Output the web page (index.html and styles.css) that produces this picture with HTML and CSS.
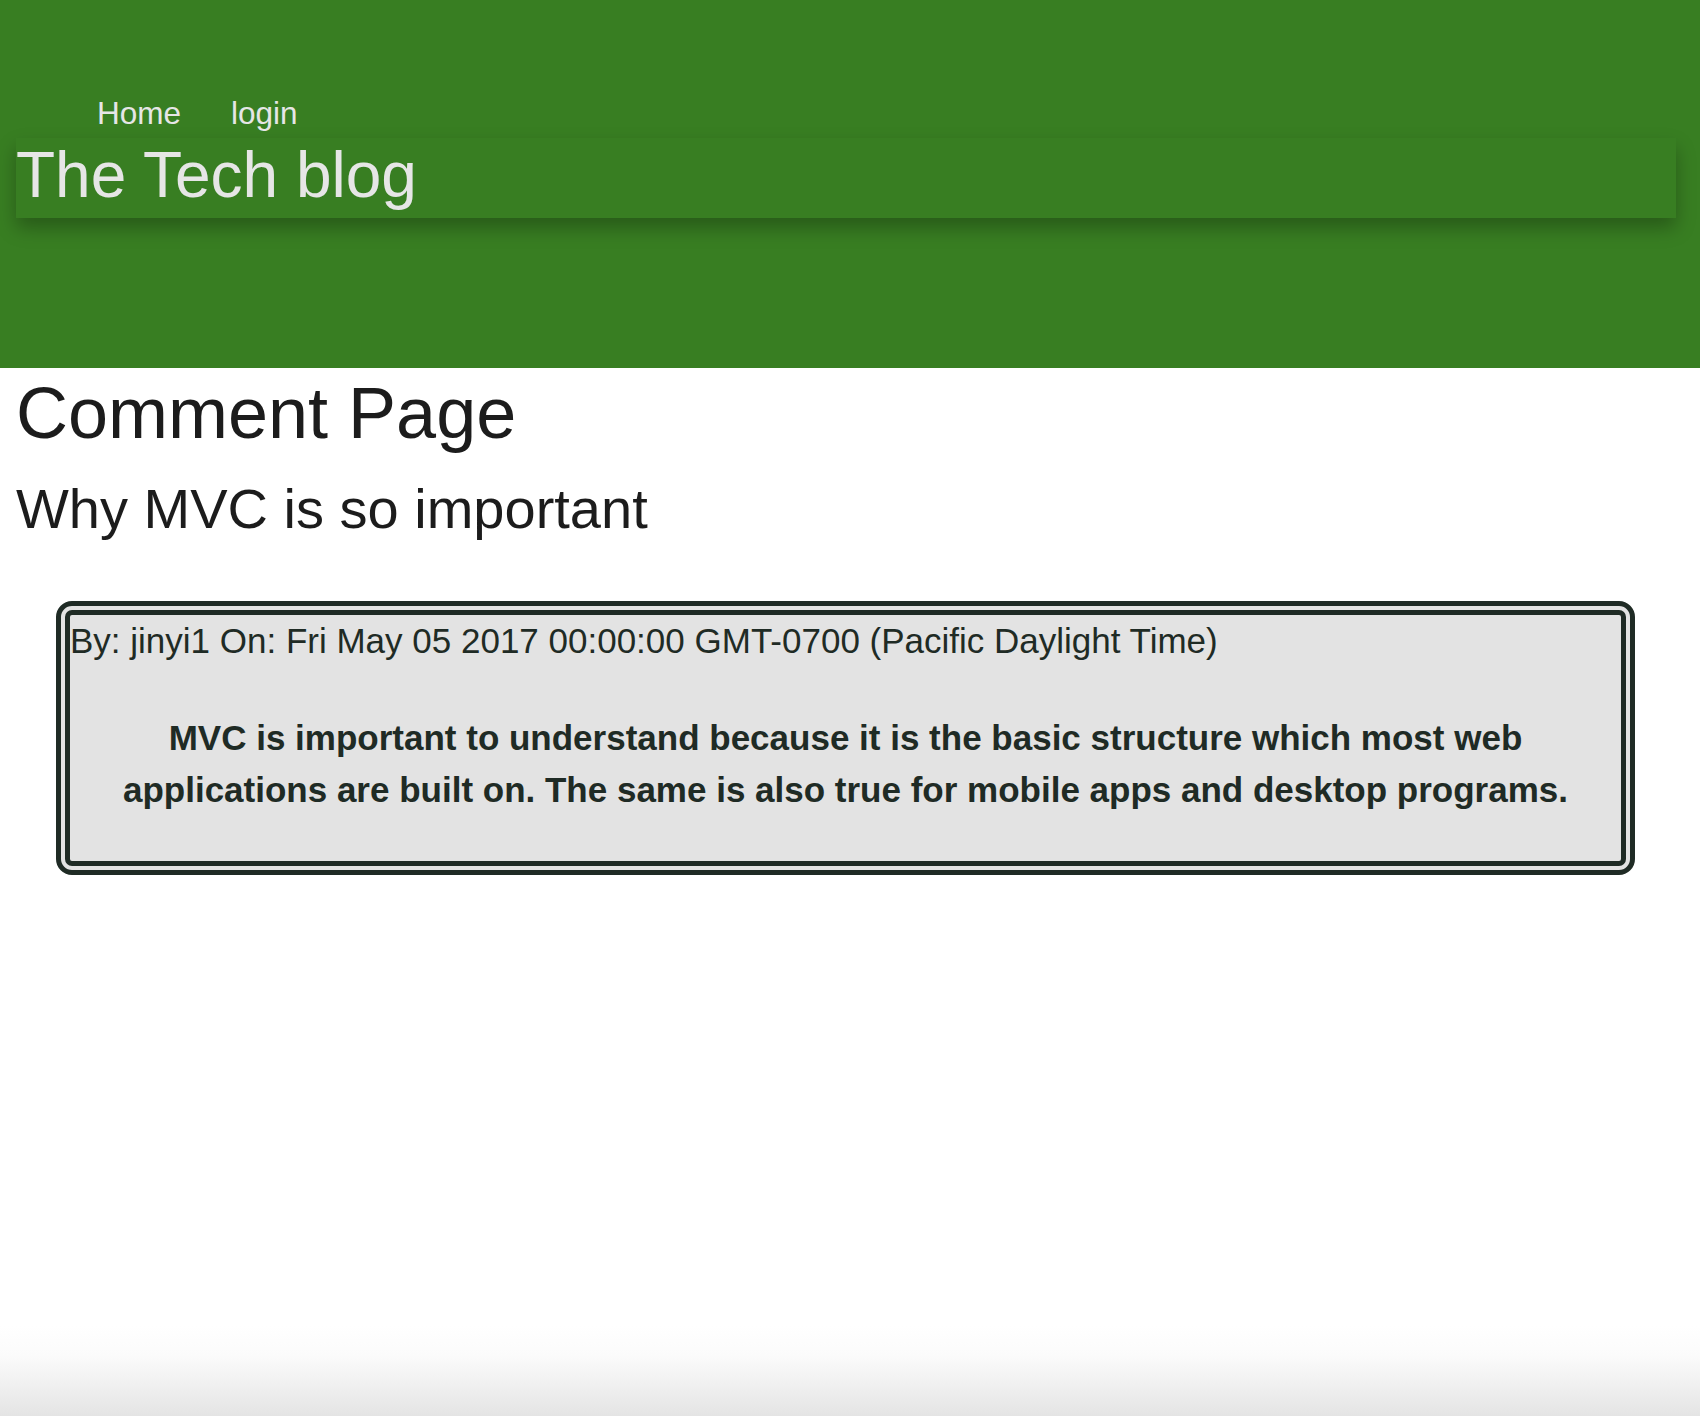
FILE: index.html
```html
<!DOCTYPE html>
<html lang="en">
<head>
<meta charset="utf-8">
<title>The Tech blog</title>
<link rel="stylesheet" href="styles.css">
</head>
<body>
<header class="site-header">
  <nav class="nav">
    <a class="nav-link" href="#">Home</a>
    <a class="nav-link" href="#">login</a>
  </nav>
  <div class="brand-bar">
    <span class="brand">The Tech blog</span>
  </div>
</header>
<main class="main">
  <h1 class="page-title">Comment Page</h1>
  <h2 class="post-title">Why MVC is so important</h2>
  <article class="comment-card">
    <div class="comment-meta">By: jinyi1 On: Fri May 05 2017 00:00:00 GMT-0700 (Pacific Daylight Time)</div>
    <p class="comment-body">MVC is important to understand because it is the basic structure which most web applications are built on. The same is also true for mobile apps and desktop programs.</p>
  </article>
</main>
</body>
</html>
```
FILE: styles.css
```css
html {
  min-height: 100%;
  background: linear-gradient(to bottom, #ffffff 0, #ffffff calc(100% - 90px), #fbfbfb calc(100% - 60px), #e4e4e4 100%);
}
body {
  margin: 0;
  font-family: "Liberation Sans", Arial, Helvetica, sans-serif;
  color: #1c1c1c;
}
.site-header {
  background: #387e22;
  height: 368px;
  box-sizing: border-box;
  padding-top: 95px;
}
.nav {
  display: flex;
  gap: 50px;
  padding-left: 97px;
  height: 43px;
}
.nav-link {
  color: #e6e6e6;
  text-decoration: none;
  font-size: 31.5px;
  line-height: 37px;
}
.brand-bar {
  margin: 0 24px 0 16px;
  height: 80px;
  background: #387e22;
  box-shadow: 0 10px 18px rgba(0, 0, 0, 0.28);
}
.brand {
  display: block;
  color: #e6e6e6;
  font-size: 64px;
  line-height: 75px;
}
.main {
  padding: 0 0 0 16px;
}
.page-title {
  margin: 3px 0 0;
  font-weight: normal;
  font-size: 72px;
  line-height: 84px;
  color: #1c1c1c;
}
.post-title {
  margin: 21px 0 0;
  font-weight: normal;
  font-size: 56px;
  line-height: 65px;
  color: #1c1c1c;
}
.comment-card {
  margin: 60px 65px 0 40px;
  background: #e3e3e3;
  border: 14px double #1f2b25;
  border-radius: 16px;
  color: #1f2b25;
}
.comment-meta {
  font-size: 35px;
  line-height: 51px;
}
.comment-body {
  margin: 46px 0 45px;
  text-align: center;
  font-weight: bold;
  font-size: 35px;
  line-height: 52px;
}
```
